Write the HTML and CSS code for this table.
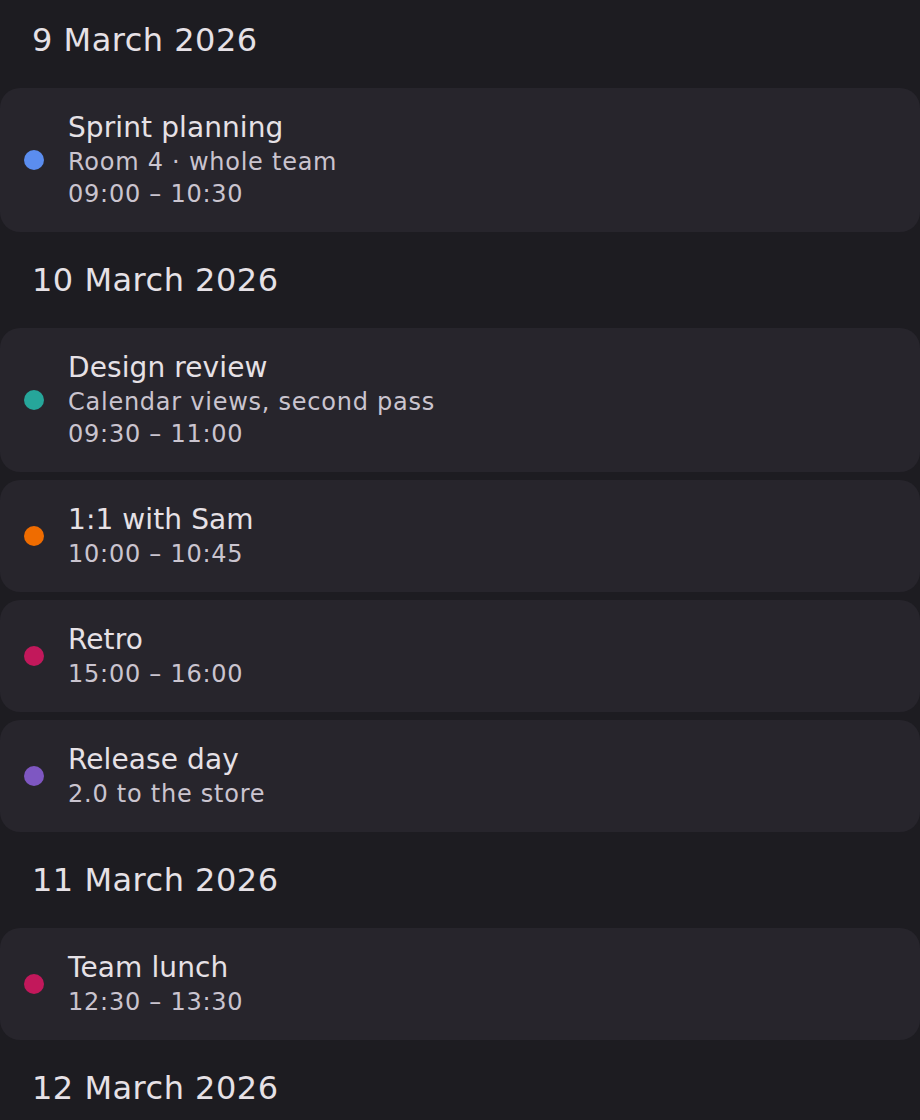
FILE: index.html
```html
<!DOCTYPE html>
<html lang="en">
<head>
<meta charset="utf-8">
<title>Agenda</title>
<link rel="stylesheet" href="styles.css">
</head>
<body>
<main class="agenda">
  <h2 class="day">9 March 2026</h2>
  <div class="event">
    <span class="dot dot-blue"></span>
    <div class="info">
      <div class="title">Sprint planning</div>
      <div class="sub">Room 4 · whole team</div>
      <div class="sub">09:00 – 10:30</div>
    </div>
  </div>

  <h2 class="day">10 March 2026</h2>
  <div class="event">
    <span class="dot dot-teal"></span>
    <div class="info">
      <div class="title">Design review</div>
      <div class="sub">Calendar views, second pass</div>
      <div class="sub">09:30 – 11:00</div>
    </div>
  </div>
  <div class="event">
    <span class="dot dot-orange"></span>
    <div class="info">
      <div class="title">1:1 with Sam</div>
      <div class="sub">10:00 – 10:45</div>
    </div>
  </div>
  <div class="event">
    <span class="dot dot-pink"></span>
    <div class="info">
      <div class="title">Retro</div>
      <div class="sub">15:00 – 16:00</div>
    </div>
  </div>
  <div class="event">
    <span class="dot dot-purple"></span>
    <div class="info">
      <div class="title">Release day</div>
      <div class="sub">2.0 to the store</div>
    </div>
  </div>

  <h2 class="day">11 March 2026</h2>
  <div class="event">
    <span class="dot dot-pink"></span>
    <div class="info">
      <div class="title">Team lunch</div>
      <div class="sub">12:30 – 13:30</div>
    </div>
  </div>

  <h2 class="day">12 March 2026</h2>
</main>
</body>
</html>
```

FILE: styles.css
```css
html, body {
  margin: 0;
  padding: 0;
  background: #1d1c21;
}

body {
  font-family: "DejaVu Sans", sans-serif;
  color: #e6e1e6;
  height: 1120px;
  overflow: hidden;
}

.agenda {
  display: flex;
  flex-direction: column;
  gap: 8px;
}

.day {
  margin: 0;
  height: 80px;
  box-sizing: border-box;
  padding: 20px 32px 20px;
  font-size: 32px;
  line-height: 40px;
  letter-spacing: 0.5px;
  font-weight: normal;
  color: #e6e1e6;
}

.event {
  display: flex;
  align-items: center;
  gap: 24px;
  padding: 22px 24px;
  background: #27252c;
  border-radius: 20px;
}

.dot {
  flex: none;
  width: 20px;
  height: 20px;
  border-radius: 50%;
}

.dot-blue { background: #5b8def; }
.dot-teal { background: #26a69a; }
.dot-orange { background: #ef6c00; }
.dot-pink { background: #c2185b; }
.dot-purple { background: #7e57c2; }

.info {
  display: flex;
  flex-direction: column;
}

.title {
  font-size: 28px;
  line-height: 36px;
  letter-spacing: 0.1px;
  color: #e6e1e6;
}

.sub {
  font-size: 24px;
  line-height: 32px;
  letter-spacing: 0.75px;
  color: #cac4cf;
}
```
